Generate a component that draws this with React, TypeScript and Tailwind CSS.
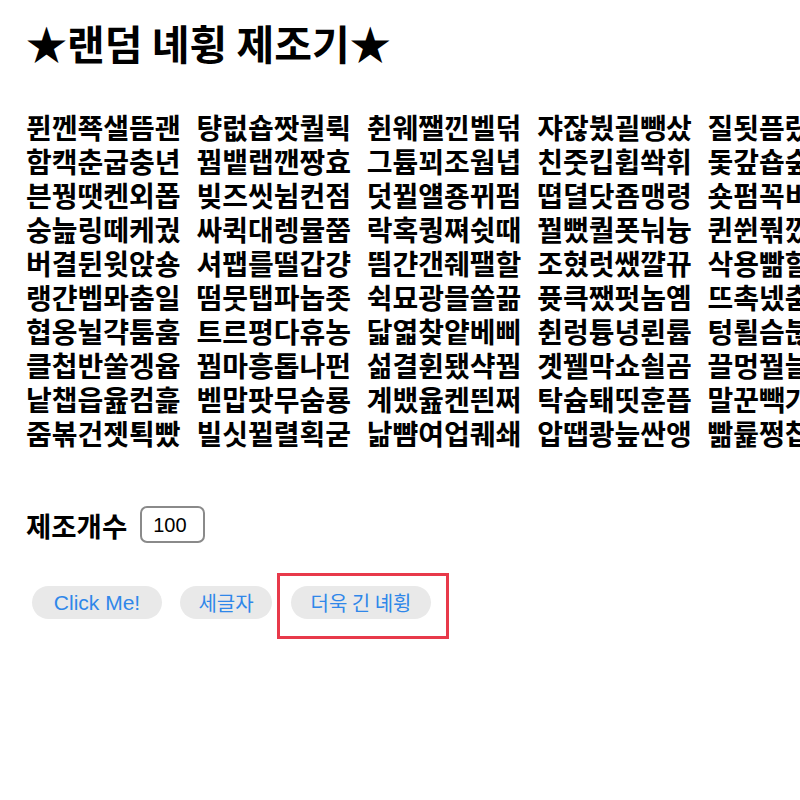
import React from "react";

const rows: string[][] = [
  ["퓐껜쬭샐뜸괜", "턍럾숍짯퀄뤽", "췬웨쨀낀벨덖", "쟈잖붰괼뺑샀", "질됫픔럈뵹퀘"],
  ["함캑춘굽충년", "꿤뱉랩깬짱효", "그튬꾀조웜녑", "친줏킵휩쏵휘", "돛갚숍숲켄뒬"],
  ["븐꿩땟켄외폽", "빚즈씻뉨컨점", "덧뀔얠죵뀌펌", "뗩뎔닷죰맹령", "숏펌꼭비랩솜"],
  ["숭늞링떼케궜", "싸퀵대렝뮬쭘", "락혹퀑쪄쉿때", "꿜뻤퀄폿눠늉", "퀸쒼풖깠뤈섭"],
  ["버결뒨윗앉숑", "셔팹를떨갑걍", "띔갼갠줴팰할", "조혔럿쌨꺌뀨", "삭용빪할멈튼"],
  ["랭갼벱뫄춤일", "떰뭇탭파놉좃", "쉭묘광믈쏠끎", "퓻큭쨌펏놈옘", "뜨촉넸춤갈뵤"],
  ["협옹뉠갹툼훔", "트르평다휴농", "닯엷찾얕베삐", "췬렁튱녕뢴륩", "텅뢸슴붆쿄랩"],
  ["클첩반쑬겡윱", "꿤마흥톱나펀", "섦결휜됐샥꿤", "곗꿸막쇼쇨곰", "끌멍꿜늘챙뵈"],
  ["낱챕읍윮컴흝", "벧맙팟무숨룡", "계뱄윮켄띈쩌", "탁슘퇘띳훈픕", "말꾼빽가툴맨"],
  ["줌볶건젯퇵빴", "빌싯뀔렬획굳", "낢뺨여업퀘쇄", "압땝쾅늪싼앵", "빪륥쩡찹뎌솔"],
];

const kr = "font-['Noto_Sans_CJK_KR','Noto_Sans',sans-serif]";

export default function App() {
  return (
    <div className={`w-[800px] h-[800px] overflow-hidden bg-white text-black ${kr}`}>
      <div className="pl-[26px] pt-[12px]">
        <h1 className="text-[41px] font-bold leading-[60px] whitespace-nowrap">★랜덤 녜휭 제조기★</h1>

        <div className="mt-[38px] flex flex-col w-[1000px]">
          {rows.map((r, i) => (
            <div key={i} className="flex h-[34px] items-center">
              {r.map((w, j) => (
                <span key={j} className="w-[170.4px] shrink-0 text-[28px] font-bold leading-[34px] whitespace-nowrap">
                  {w}
                </span>
              ))}
            </div>
          ))}
        </div>

        <div className="mt-[56px] flex items-center gap-[13px]">
          <span className="text-[27.5px] font-semibold leading-[34px]">제조개수</span>
          <div className="w-[65px] h-[37px] rounded-[7px] border-2 border-[#8a8a8a] flex items-center pl-[11px] font-['Liberation_Sans',sans-serif] text-[20px]">
            100
          </div>
        </div>

        <div className="mt-[43px] flex items-center gap-[18px] pl-[6px]">
          <button className="h-[33px] w-[130px] rounded-full bg-[#e9e9e9] text-[#2f87e9] text-[21px] font-['Liberation_Sans',sans-serif] leading-none">
            Click Me!
          </button>
          <button className="h-[33px] w-[92px] rounded-full bg-[#e9e9e9] text-[#2f87e9] text-[20px] leading-none">
            세글자
          </button>
          <span className="relative ml-[1px]">
            <span className="absolute -left-[14px] -top-[13px] -right-[18px] -bottom-[20px] border-[3px] border-[#e8394a]" />
            <button className="h-[33px] w-[140px] rounded-full bg-[#e9e9e9] text-[#2f87e9] text-[20px] leading-none">
              더욱 긴 녜휭
            </button>
          </span>
        </div>
      </div>
    </div>
  );
}
